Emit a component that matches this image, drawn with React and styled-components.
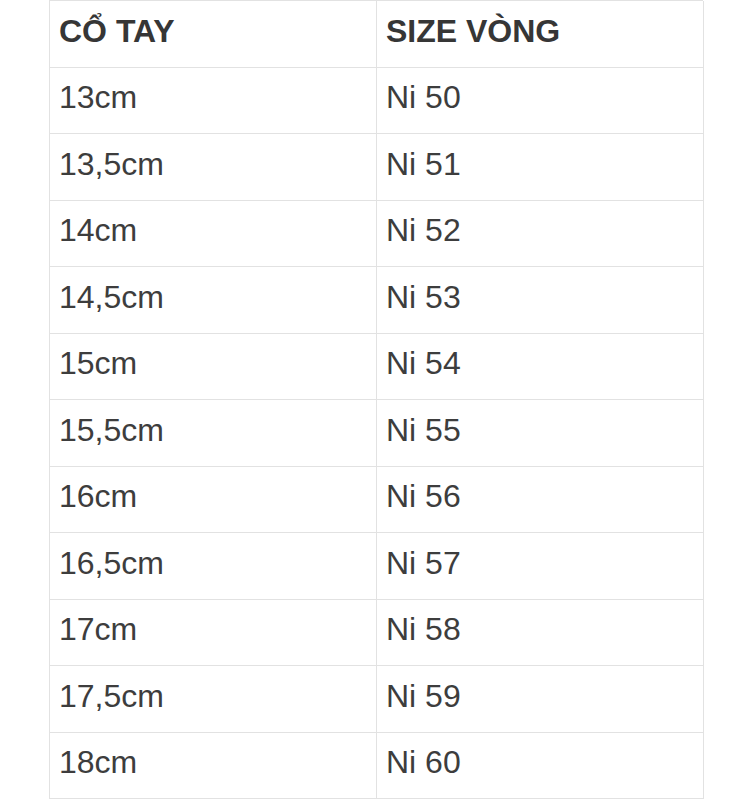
import React from 'react';
import styled, { createGlobalStyle } from 'styled-components';

const GlobalStyle = createGlobalStyle`
  html, body {
    margin: 0;
    padding: 0;
    background: #ffffff;
  }
  body {
    font-family: 'Liberation Sans', Arial, sans-serif;
  }
`;

const Page = styled.div`
  width: 744px;
  height: 800px;
  overflow: hidden;
  padding-left: 49px;
  box-sizing: border-box;
`;

const Table = styled.div`
  display: grid;
  grid-template-columns: 327px 327px;
  grid-auto-rows: 66.5px;
  width: 654px;
  border-top: 1px solid #e2e2e2;
  border-left: 1px solid #e2e2e2;
  box-sizing: border-box;
`;

const Cell = styled.div`
  display: flex;
  align-items: center;
  box-sizing: border-box;
  border-right: 1px solid #e2e2e2;
  border-bottom: 1px solid #e2e2e2;
  padding: 0 9px 5px;
  font-size: 32px;
  font-weight: ${({ $head }) => ($head ? 700 : 400)};
  color: ${({ $head }) => ($head ? '#363636' : '#3d3d3d')};
  white-space: nowrap;
`;

const rows = [
  ['13cm', 'Ni 50'],
  ['13,5cm', 'Ni 51'],
  ['14cm', 'Ni 52'],
  ['14,5cm', 'Ni 53'],
  ['15cm', 'Ni 54'],
  ['15,5cm', 'Ni 55'],
  ['16cm', 'Ni 56'],
  ['16,5cm', 'Ni 57'],
  ['17cm', 'Ni 58'],
  ['17,5cm', 'Ni 59'],
  ['18cm', 'Ni 60'],
];

const App = () => (
  <Page>
    <GlobalStyle />
    <Table>
      <Cell $head>CỔ TAY</Cell>
      <Cell $head>SIZE VÒNG</Cell>
      {rows.map(([wrist, size]) => (
        <React.Fragment key={wrist}>
          <Cell>{wrist}</Cell>
          <Cell>{size}</Cell>
        </React.Fragment>
      ))}
    </Table>
  </Page>
);

export default App;
